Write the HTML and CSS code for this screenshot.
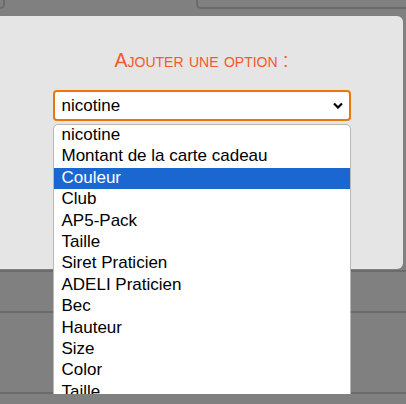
FILE: index.html
```html
<!DOCTYPE html>
<html lang="fr">
<head>
    <meta charset="UTF-8">
    <meta name="viewport" content="width=device-width, initial-scale=1.0">
    <title>Ajouter une option</title>
    <link rel="stylesheet" href="styles.css">
</head>
<body>
    <div class="topbar">
        <div class="tab tableft"></div>
        <div class="tab tabright"></div>
    </div>

    <div class="modal">
        <h2 class="title">Ajouter une option :</h2>
        <div class="selectwrap">
            <select class="optselect" id="optSelect">
                <option>nicotine</option>
            </select>
            <ul class="optlist">
                <li>nicotine</li>
                <li>Montant de la carte cadeau</li>
                <li class="active">Couleur</li>
                <li>Club</li>
                <li>AP5-Pack</li>
                <li>Taille</li>
                <li>Siret Praticien</li>
                <li>ADELI Praticien</li>
                <li>Bec</li>
                <li>Hauteur</li>
                <li>Size</li>
                <li>Color</li>
                <li>Taille</li>
            </ul>
        </div>
    </div>

    <div class="row rowfirst"></div>
    <div class="row rowsecond"></div>
    <div class="row rowthird"></div>
</body>
</html>
```

FILE: styles.css
```css
body{
    margin: 0;
    background-color: #808080;
    font-family: "Liberation Sans", Arial, sans-serif;
    overflow: hidden;
}
.topbar{
    display: flex;
    justify-content: space-between;
    height: 16px;
}
.tab{
    height: 7px;
    border-bottom: 2px solid #6b6b6b;
}
.tableft{
    width: 3px;
    border-right: 2px solid #6b6b6b;
    border-bottom-right-radius: 5px;
}
.tabright{
    width: 208px;
    border-left: 2px solid #6b6b6b;
    border-bottom-left-radius: 5px;
}
.modal{
    width: 403px;
    height: 253px;
    background-color: #e5e5e5;
    border-radius: 0 6px 6px 0;
    box-sizing: border-box;
    padding-top: 33px;
}
.title{
    margin: 0;
    text-align: center;
    font-weight: normal;
    font-size: 19.5px;
    line-height: 22px;
    font-variant: small-caps;
    color: #f25a2a;
}
.selectwrap{
    position: relative;
    width: 298px;
    margin: 19px auto 0;
}
.optselect{
    display: block;
    width: 100%;
    height: 31px;
    box-sizing: border-box;
    border: 2px solid #e8780c;
    border-radius: 4px;
    background-color: white;
    padding: 0 0 0 7px;
    font-family: "Liberation Sans", Arial, sans-serif;
    font-size: 17px;
    color: black;
    -webkit-appearance: none;
    appearance: none;
    background-image: url("data:image/svg+xml,%3Csvg xmlns='http://www.w3.org/2000/svg' width='10' height='7' viewBox='0 0 10 7'%3E%3Cpath d='M1 1.5 L5 5.5 L9 1.5' fill='none' stroke='black' stroke-width='2.2'/%3E%3C/svg%3E");
    background-repeat: no-repeat;
    background-position: right 6px center;
    outline: none;
}
.optlist{
    position: absolute;
    top: 34px;
    left: 0;
    right: 0;
    margin: 0;
    padding: 0;
    list-style: none;
    background-color: white;
    border: 1px solid #b8b8b8;
    border-radius: 5px;
    overflow: hidden;
    font-size: 17px;
    color: black;
}
.optlist li{
    height: 21.4px;
    line-height: 19.5px;
    padding-left: 8px;
}
.optlist li.active{
    background-color: #1a67d2;
    color: white;
}
.row{
    border-bottom: 2px solid #6b6b6b;
}
.rowfirst{
    height: 0;
    margin-top: 1px;
}
.rowsecond{
    height: 39px;
}
.rowthird{
    height: 79px;
}
```
